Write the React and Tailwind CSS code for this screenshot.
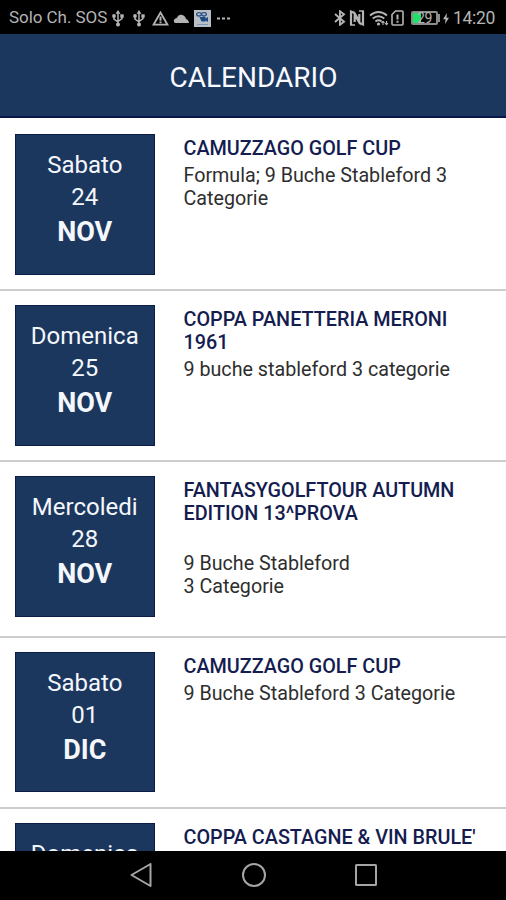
import React from "react";

const events = [
    { day: "Sabato", date: "24", month: "NOV", title: "CAMUZZAGO GOLF CUP", lines: ["Formula; 9 Buche Stableford 3 Categorie"] },
    { day: "Domenica", date: "25", month: "NOV", title: "COPPA PANETTERIA MERONI 1961", lines: ["9 buche stableford 3 categorie"] },
    { day: "Mercoledi", date: "28", month: "NOV", title: "FANTASYGOLFTOUR AUTUMN EDITION 13^PROVA", lines: ["9 Buche Stableford", "3 Categorie"], spaced: true },
    { day: "Sabato", date: "01", month: "DIC", title: "CAMUZZAGO GOLF CUP", lines: ["9 Buche Stableford 3 Categorie"] },
    { day: "Domenica", title: "COPPA CASTAGNE & VIN BRULE'", lines: [] },
];

function UsbIcon() {
    return (
        <svg width="12" height="17" viewBox="0 0 12 17" fill="none" stroke="currentColor" strokeWidth="1.5">
            <path d="M6 3v11M2 6v3l4 3M10 6v2.5L6 11.5" />
            <path d="M6 0L8.5 3.8h-5z" fill="currentColor" stroke="none" />
            <circle cx="6" cy="14.6" r="2" fill="currentColor" stroke="none" />
            <circle cx="2" cy="6" r="1.9" fill="currentColor" stroke="none" />
            <path d="M8.3 4.3h3.4v3.4H8.3z" fill="currentColor" stroke="none" />
        </svg>
    );
}

function StatusBar() {
    return (
        <div className="h-[34px] shrink-0 bg-black text-[#b4b4b4] flex items-center justify-between pl-[9px] pr-[11px] pt-[2px]">
            <div className="flex items-center">
                <span className="text-[17px] w-[99px] whitespace-nowrap tracking-[-0.05px]">Solo Ch. SOS</span>
                <span className="ml-[4px]"><UsbIcon /></span>
                <span className="ml-[9px]"><UsbIcon /></span>
                {/* warning */}
                <svg className="ml-[7px]" width="17" height="15" viewBox="0 0 17 15" fill="none" stroke="currentColor" strokeWidth="1.8">
                    <path d="M8.5 1.5L15.5 13.7H1.5z" />
                    <path d="M8.5 5.5v4.3M8.5 10.5v1.8" strokeWidth="2" />
                </svg>
                {/* cloud */}
                <svg className="ml-[4px]" width="16" height="10" viewBox="0 0 16 10" fill="currentColor">
                    <path d="M2 10a2.6 2.6 0 0 1 .5-4.6L4 4.800A4.300 4.300 0 0 1 11.500 3.300 5 5 0 0 1 13 6q2.500.4 3 4z" />
                </svg>
                {/* app notification */}
                <svg className="ml-[5px]" width="17" height="17" viewBox="0 0 17 17">
                    <rect width="17" height="17" fill="#b9bfc6" />
                    <g fill="none" stroke="#2d5685" strokeWidth="1.3">
                        <ellipse cx="5" cy="4.3" rx="2.4" ry="1.7" />
                        <ellipse cx="10" cy="4.3" rx="2.4" ry="1.7" />
                    </g>
                    <path d="M5.5 7h6v4.5h-4zM11.5 8.5L14 7v5l-2.500-1.500z" fill="#1d4a85" />
                    <path d="M3 14.5h11" stroke="#7d9ab5" strokeWidth="1" />
                </svg>
                <svg className="ml-[6px]" width="13" height="3" viewBox="0 0 13 3" fill="currentColor">
                    <path d="M0 .5h3v2H0zM5 .5h3v2H5zM10 .5h3v2h-3z" />
                </svg>
            </div>
            <div className="flex items-center">
                {/* bluetooth */}
                <svg width="12" height="16" viewBox="0 0 12 16" fill="none" stroke="currentColor" strokeWidth="1.9">
                    <path d="M1 4l9 7.700-4 3V1.300l4 3L1 12" />
                </svg>
                {/* nfc */}
                <svg className="ml-[3px]" width="16" height="16" viewBox="0 0 16 16" fill="none" stroke="currentColor">
                    <path d="M2 15V1.500L5.500 3l4.800 8.500V4" strokeWidth="2.200" />
                    <path d="M14 1v13.500L10.500 13 5.700 4.500V12" strokeWidth="2.200" />
                    <path d="M1 15h5M10 1h5" strokeWidth="1.500" />
                </svg>
                {/* wifi */}
                <svg className="ml-[4px]" width="20" height="16" viewBox="0 0 20 16" fill="none" stroke="currentColor" strokeWidth="1.9">
                    <path d="M1 5.5q8.500-7 17 0M3.700 8.600q5.800-4.700 11.600 0M6.400 11.500q3.100-2.400 6.200 0" />
                    <circle cx="9.5" cy="14" r="1.6" fill="currentColor" stroke="none" />
                    <path d="M14 15v-3.500M12.500 12.800l1.500-1.500 1.500 1.500M17.500 11v3.500M16 13.200l1.500 1.500 1.500-1.500" strokeWidth="1.1" />
                </svg>
                {/* sim alert */}
                <svg className="ml-[2px]" width="13" height="16" viewBox="0 0 13 16" fill="none" stroke="currentColor" strokeWidth="1.6">
                    <path d="M4.5 1H11q1 0 1 1v12q0 1-1 1H2q-1 0-1-1V4.500z" />
                    <path d="M6.5 4.500v5M6.500 10.800v2" strokeWidth="2" />
                </svg>
                <div className="ml-[7px] relative w-[27px] h-[14px] border-2 border-[#8c8c8c] rounded-[2px] flex">
                    <div className="w-[8px] bg-[#20e067]"></div>
                    <span className="absolute inset-0 text-center text-[14px] leading-[11px] tracking-[-0.3px]">29</span>
                </div>
                <div className="w-[2px] h-[8px] bg-[#8c8c8c]"></div>
                <svg className="ml-[3px]" width="6" height="11" viewBox="0 0 6 11" fill="currentColor">
                    <path d="M4 0L0 6.200h2.500L2 11l4-6.300H3.500z" />
                </svg>
                <span className="ml-[4px] w-[42px] text-[17.5px] whitespace-nowrap tracking-[-0.3px]">14:20</span>
            </div>
        </div>
    );
}

function EventRow({ event }) {
    return (
        <div className={`flex items-start pl-[14.5px] pr-5 pt-[14px] border-b-2 border-[#cdcdcd] shrink-0 ${event.spaced ? "h-[175.5px]" : "h-[171px]"}`}>
            <div className="w-[140.5px] h-[140.5px] shrink-0 bg-[#1c375e] border border-[#0c1c48] text-[#f4f7fc] text-center pt-[14px] text-[24px] leading-[32px]">
                <div>{event.day}</div>
                <div>{event.date}</div>
                <div className="text-[27px] font-bold leading-[38px]">{event.month}</div>
            </div>
            <div className="ml-[28.5px] flex-1 min-w-0 text-[19.8px] leading-[23px] pt-[3px]">
                <h2 className="font-medium text-[#141c50]">{event.title}</h2>
                <div className={`text-[19.7px] text-[#2e2e2e] ${event.spaced ? "pt-[27px]" : "pt-[4px]"}`}>
                    {event.lines.map((line) => (
                        <p key={line}>{line}</p>
                    ))}
                </div>
            </div>
        </div>
    );
}

function NavBar() {
    return (
        <div className="h-[49px] shrink-0 bg-black flex items-center justify-center gap-[89px] pb-[2px] text-[#a5a5a5]">
            <svg width="24" height="24" viewBox="0 0 24 24" fill="none" stroke="currentColor" strokeWidth="2" strokeLinejoin="round">
                <path d="M21.5 1v22L2.500 12z" />
            </svg>
            <svg width="24" height="24" viewBox="0 0 24 24" fill="none" stroke="currentColor" strokeWidth="2">
                <circle cx="12" cy="12" r="11" />
            </svg>
            <svg width="22" height="22" viewBox="0 0 22 22" fill="none" stroke="currentColor" strokeWidth="2">
                <rect x="1" y="1" width="20" height="20" rx="0.5" />
            </svg>
        </div>
    );
}

export default function App() {
    return (
        <div className="w-[506px] h-[900px] bg-white flex flex-col overflow-hidden font-[Roboto,sans-serif]">
            <StatusBar />
            <header className="h-[84px] shrink-0 bg-[#1c375e] border-b-2 border-[#0a1549] flex items-center justify-center pt-[6px] pl-px">
                <h1 className="text-[28px] text-[#f8faff]">CALENDARIO</h1>
            </header>
            <main className="flex-1 min-h-0 overflow-hidden flex flex-col pt-[2px]">
                {events.map((event, i) => (
                    <EventRow key={i} event={event} />
                ))}
            </main>
            <NavBar />
        </div>
    );
}
